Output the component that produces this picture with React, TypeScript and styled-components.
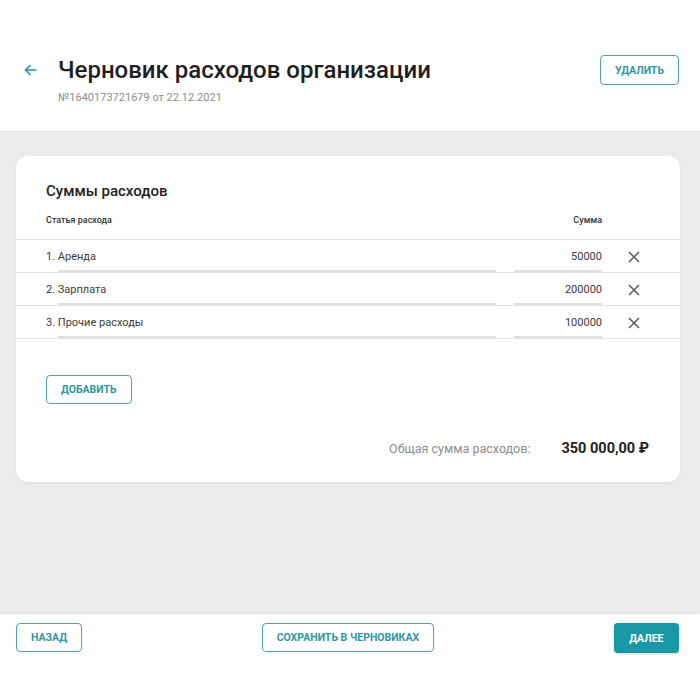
import React from "react";
import styled, { createGlobalStyle } from "styled-components";

const Global = createGlobalStyle`
  html, body { margin: 0; padding: 0; }
  body { font-family: Roboto, "Noto Sans", Arial, sans-serif; background: #ececec; color: #222; }
  * { box-sizing: border-box; }
`;

const Page = styled.div`
  width: 700px;
  height: 700px;
  display: flex;
  flex-direction: column;
  background: #ececec;
`;

const Header = styled.header`
  height: 132px;
  background: #fff;
  display: flex;
  align-items: flex-start;
  padding: 55px 21px 0 24px;
  border-bottom: 1px solid #e2e2e2;
`;

const BackButton = styled.button`
  border: 0;
  background: none;
  padding: 0;
  margin: 7px 21px 0 0;
  width: 13px;
  height: 16px;
  display: flex;
  align-items: center;
  cursor: pointer;
`;

const TitleBlock = styled.div`
  flex: 1;
  display: flex;
  flex-direction: column;
`;

const Title = styled.h1`
  margin: 0;
  font-size: 24px;
  font-weight: 500;
  line-height: 30px;
  color: #1f1f1f;
`;

const Subtitle = styled.div`
  margin-top: 6px;
  font-size: 11px;
  color: #8d8d8d;
`;

const OutlineButton = styled.button<{ $h?: number }>`
  height: ${(p) => p.$h ?? 30}px;
  padding: 0 14px;
  border: 1px solid #4da4ae;
  border-radius: 4px;
  background: #fff;
  color: #2e97a3;
  font-family: Roboto, Arial, sans-serif;
  font-size: 10.5px;
  font-weight: 700;
  text-transform: uppercase;
  cursor: pointer;
`;

const FilledButton = styled.button`
  height: 30px;
  padding: 0 15.5px;
  border: 0;
  border-radius: 4px;
  background: #1898a4;
  color: #fff;
  font-family: Roboto, Arial, sans-serif;
  font-size: 10.5px;
  font-weight: 700;
  text-transform: uppercase;
  box-shadow: 0 1px 3px rgba(0, 0, 0, 0.2);
  cursor: pointer;
`;

const Main = styled.main`
  flex: 1;
  padding: 24px 20px 0 16px;
`;

const Card = styled.section`
  background: #fff;
  border-radius: 12px;
  box-shadow: 0 1px 3px rgba(0, 0, 0, 0.06);
  padding: 26px 0 20px;
`;

const CardTitle = styled.h2`
  margin: 0;
  padding-left: 30px;
  font-size: 15px;
  font-weight: 500;
  line-height: 18px;
  color: #222;
`;

const Grid = styled.div`
  display: grid;
  grid-template-columns: 480px 88px 1fr;
  column-gap: 18px;
`;

const HeadRow = styled(Grid)`
  height: 40px;
  align-items: center;
  border-bottom: 1px solid #e3e3e3;
  font-size: 9px;
  font-weight: 500;
  color: #333;
`;

const HeadLabel = styled.div<{ $right?: boolean }>`
  padding-left: ${(p) => (p.$right ? 0 : 30)}px;
  text-align: ${(p) => (p.$right ? "right" : "left")};
  padding-top: 1px;
`;

const Row = styled(Grid)`
  height: 33px;
  border-bottom: 1px solid #e3e3e3;
`;

const Cell = styled.div<{ $pad?: number }>`
  display: flex;
  flex-direction: column;
  padding-left: ${(p) => p.$pad ?? 0}px;
`;

const CellText = styled.div<{ $right?: boolean }>`
  flex: 1;
  display: flex;
  align-items: center;
  justify-content: ${(p) => (p.$right ? "flex-end" : "flex-start")};
  padding-top: 2px;
  font-size: 11px;
  color: #3a3a3a;
`;

const Underline = styled.div<{ $indent?: number }>`
  height: 2px;
  margin-left: ${(p) => p.$indent ?? 0}px;
  background: #e0e0e0;
`;

const RemoveCell = styled.div`
  display: flex;
  align-items: center;
  padding-left: 8px;
  padding-top: 2px;
`;

const AddWrap = styled.div`
  margin-top: 36px;
  padding-left: 30px;
`;

const TotalRow = styled.div`
  margin-top: 30px;
  height: 28px;
  display: flex;
  align-items: center;
  justify-content: flex-end;
  gap: 31px;
  padding-right: 31px;
`;

const TotalLabel = styled.span`
  font-size: 12.5px;
  color: #8e8e8e;
`;

const TotalValue = styled.span`
  font-size: 14.5px;
  font-weight: 700;
  color: #222;
`;

const Footer = styled.footer`
  height: 86px;
  background: #fff;
  display: flex;
  align-items: flex-start;
  justify-content: space-between;
  padding: 9px 21px 0 16px;
  box-shadow: 0 -1px 3px rgba(0, 0, 0, 0.05);
`;

const items = [
  { name: "1. Аренда", sum: "50000" },
  { name: "2. Зарплата", sum: "200000" },
  { name: "3. Прочие расходы", sum: "100000" },
];

const CloseIcon = () => (
  <svg width="12" height="12" viewBox="0 0 12 12">
    <path d="M1 1L11 11M11 1L1 11" stroke="#5a5a5a" strokeWidth="1.5" fill="none" />
  </svg>
);

export default function App() {
  return (
    <Page>
      <Global />
      <Header>
        <BackButton aria-label="Назад">
          <svg width="13" height="12" viewBox="0 0 13 12">
            <path d="M12.5 6H1.5M6.5 1L1.5 6L6.5 11" stroke="#1f97a3" strokeWidth="1.6" fill="none" />
          </svg>
        </BackButton>
        <TitleBlock>
          <Title>Черновик расходов организации</Title>
          <Subtitle>№1640173721679 от 22.12.2021</Subtitle>
        </TitleBlock>
        <OutlineButton>Удалить</OutlineButton>
      </Header>
      <Main>
        <Card>
          <CardTitle>Суммы расходов</CardTitle>
          <HeadRow>
            <HeadLabel>Статья расхода</HeadLabel>
            <HeadLabel $right>Сумма</HeadLabel>
            <div />
          </HeadRow>
          {items.map((it) => (
            <Row key={it.name}>
              <Cell $pad={30}>
                <CellText>{it.name}</CellText>
                <Underline $indent={12} />
              </Cell>
              <Cell>
                <CellText $right>{it.sum}</CellText>
                <Underline />
              </Cell>
              <RemoveCell>
                <CloseIcon />
              </RemoveCell>
            </Row>
          ))}
          <AddWrap>
            <OutlineButton $h={29}>Добавить</OutlineButton>
          </AddWrap>
          <TotalRow>
            <TotalLabel>Общая сумма расходов:</TotalLabel>
            <TotalValue>350 000,00 ₽</TotalValue>
          </TotalRow>
        </Card>
      </Main>
      <Footer>
        <OutlineButton $h={29}>Назад</OutlineButton>
        <OutlineButton $h={29}>Сохранить в черновиках</OutlineButton>
        <FilledButton>Далее</FilledButton>
      </Footer>
    </Page>
  );
}
